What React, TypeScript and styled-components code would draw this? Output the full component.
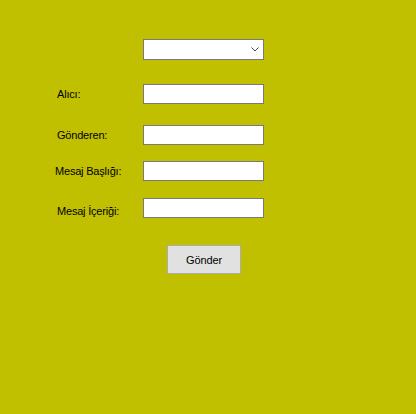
import React from "react";
import styled, { createGlobalStyle } from "styled-components";

const Global = createGlobalStyle`
  html, body {
    margin: 0;
    padding: 0;
    background: #c0c000;
    width: 416px;
    height: 414px;
    overflow: hidden;
  }
  body {
    font-family: "Liberation Sans", Arial, sans-serif;
    font-size: 11px;
    color: #000;
  }
`;

const Form = styled.div`
  display: flex;
  flex-direction: column;
  padding-top: 39px;
  width: 416px;
  height: 414px;
  box-sizing: border-box;
`;

const Row = styled.div<{ $gap: number }>`
  display: grid;
  grid-template-columns: 143px 121px;
  align-items: center;
  margin-top: ${(p) => p.$gap}px;
`;

const Label = styled.label<{ $indent: number; $drop?: number }>`
  padding-left: ${(p) => p.$indent}px;
  margin-top: ${(p) => (p.$drop ?? 0) * 2}px;
  white-space: nowrap;
  line-height: 13px;
  letter-spacing: -0.2px;
`;

const TextBox = styled.div`
  width: 121px;
  height: 20px;
  box-sizing: border-box;
  border: 1px solid #7a7a7a;
  background: #ffffff;
`;

const Combo = styled.div`
  grid-column: 2;
  width: 121px;
  height: 21px;
  box-sizing: border-box;
  border: 1px solid #7a7a7a;
  background: #ffffff;
  display: flex;
  align-items: center;
  justify-content: flex-end;
  padding-right: 4px;
`;

const ButtonRow = styled.div`
  display: flex;
  padding-left: 167px;
  margin-top: 27px;
`;

const Button = styled.button`
  width: 74px;
  height: 29px;
  box-sizing: border-box;
  border: 1px solid #adadad;
  background: #e1e1e1;
  font-family: "Liberation Sans", Arial, sans-serif;
  font-size: 11px;
  letter-spacing: -0.1px;
  color: #000;
  padding: 0;
  margin: 0;
`;

const fields = [
  { label: "Alıcı:", gap: 24, indent: 57, drop: 0 },
  { label: "Gönderen:", gap: 21, indent: 57, drop: 0 },
  { label: "Mesaj Başlığı:", gap: 16, indent: 55, drop: 0 },
  { label: "Mesaj İçeriği:", gap: 16, indent: 57, drop: 4 },
];

export default function App() {
  return (
    <>
      <Global />
      <Form>
        <Row $gap={0}>
          <Combo>
            <svg width="8" height="5" viewBox="0 0 8 5">
              <polyline points="0.5,0.5 4,4 7.5,0.5" fill="none" stroke="#444" strokeWidth="1" />
            </svg>
          </Combo>
        </Row>
        {fields.map((f) => (
          <Row key={f.label} $gap={f.gap}>
            <Label $indent={f.indent} $drop={f.drop}>{f.label}</Label>
            <TextBox />
          </Row>
        ))}
        <ButtonRow>
          <Button>Gönder</Button>
        </ButtonRow>
      </Form>
    </>
  );
}
